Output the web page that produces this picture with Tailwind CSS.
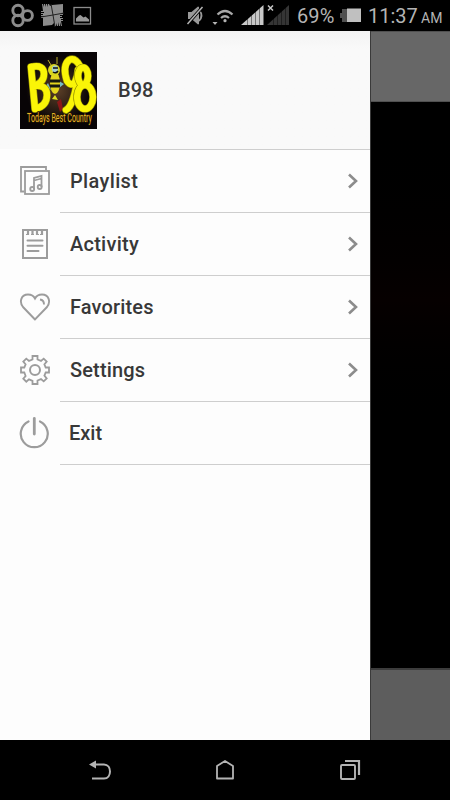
<!DOCTYPE html>
<html lang="en">
<head>
    <meta charset="UTF-8">
    <meta name="viewport" content="width=device-width, initial-scale=1.0">
    <title>B98</title>
    <script src="https://cdn.jsdelivr.net/npm/@tailwindcss/browser@4"></script>
</head>
<body class="bg-black font-['Roboto',sans-serif]">

    <div class="w-[450px] h-[800px] flex flex-col overflow-hidden">

        <!-- Status Bar -->
        <div class="h-[31px] shrink-0 flex text-[#b4b4b4]">
            <svg class="w-[37px] h-[31px] shrink-0" viewBox="0 0 37 31" fill="none" stroke="#8c8c8c" stroke-width="2.9">
                <circle cx="18" cy="10.5" r="5.2"/>
                <circle cx="18" cy="20.5" r="5.2"/>
                <circle cx="27.5" cy="15.5" r="4.9"/>
            </svg>
            <svg class="w-[32px] h-[31px] shrink-0" viewBox="37 0 32 31">
                <path fill="#8c8c8c" d="M42 4h1l1 3V4h1l1 3V4h1l1 3V4h1l1 2 2-1 11-1v9h-2v1h2v1h-3v1h2v1h-2v1h3v1h-2v1h2v1h-2l1 5h-1l-1-4v4h-1l-1-4v4h-1l-1-3v3h-1l-1-3-2 2-9 1v-8h-2v-1h3v-1h-3v-1h2v-1h-2v-1h3v-1h-3v-1h2z"/>
                <path stroke="#222" stroke-width="1" fill="none" d="M51 4l2 11 2 12M41 17l12-2 11-2"/>
            </svg>
            <svg class="w-[31px] h-[31px] shrink-0" viewBox="69 0 31 31">
                <rect x="74" y="7.500" width="16.500" height="16.500" fill="none" stroke="#8c8c8c" stroke-width="1.300"/>
                <path fill="#999" d="M76 21.500v-3l3-3 1.500-.5 3 2.500 2-1 3.500 3v2z"/>
            </svg>
            <div class="grow"></div>
            <svg class="w-[110px] h-[31px] shrink-0" viewBox="182 0 110 31">
                <!-- Muted speaker -->
                <path fill="#999" d="M188 12h3.500l6.500-5.500 1 .5v17l-1 .5-6.500-5.500H188z"/>
                <path fill="none" stroke="#999" stroke-width="1.700" d="M199 10q5 5.500 0 11"/>
                <path stroke="#000" stroke-width="3.200" d="M187 24.500L203 6.500"/>
                <path stroke="#b4b4b4" stroke-width="1.500" d="M187.500 24L202.500 7"/>
                <!-- Wifi -->
                <path fill="#b4b4b4" d="M212.500 22h5l-2.500 3z"/>
                <g fill="none" stroke="#a8a8a8" stroke-width="2.200">
                    <path d="M217.500 14.500q7.500-7 15 0"/>
                    <path d="M221 18q4-3.500 8 0"/>
                </g>
                <circle cx="225" cy="20.700" r="1.600" fill="#b4b4b4"/>
                <!-- Signal bars -->
                <path fill="#c8c8c8" d="M241 25L263.500 5v20z"/>
                <path stroke="#000" stroke-opacity=".7" stroke-width=".6" d="M247.500 5v20M251.500 5v20M255.500 5v20M259.500 5v20"/>
                <path fill="#353535" d="M267 25L289 5v20z"/>
                <path stroke="#000" stroke-opacity=".7" stroke-width=".6" d="M273.500 5v20M277.500 5v20M281.500 5v20M285.500 5v20"/>
                <path stroke="#c8c8c8" stroke-width="1.500" d="M268 5.500l5 5M273 5.500l-5 5"/>
            </svg>
            <div class="w-[46px] shrink-0 pl-[5px] text-[20px] leading-[33px] tracking-[0.1px]">69%</div>
            <svg class="w-[30px] h-[31px] shrink-0" viewBox="338 0 30 31">
                <path fill="#505050" d="M340 13h2v-4h6v13h-6v-4h-2z"/>
                <path fill="#c0c0c0" d="M347 8.500h14v13.500h-14z"/>
            </svg>
            <div class="w-[82px] shrink-0 flex items-baseline whitespace-nowrap leading-[33px]">
                <span class="w-[53px] text-[20px]">11:37</span>
                <span class="text-[14px]">AM</span>
            </div>
        </div>

        <div class="h-[709px] shrink-0 flex">
            <!-- Side Menu -->
            <div class="w-[370px] shrink-0 bg-[#fdfdfd] text-[#383838] text-[20px] font-medium">

                <div class="h-[118px] flex items-center pl-5 bg-gradient-to-b from-[#f3f3f3] via-[#f9f9f9] via-15% to-[#f9f9f9]">
                    <svg class="w-[77px] h-[77px] shrink-0 overflow-visible" viewBox="0 0 77 77">
                        <defs>
                            <radialGradient id="glow">
                                <stop offset="0" stop-color="#5b3f27"/>
                                <stop offset="1" stop-color="#080406"/>
                            </radialGradient>
                        </defs>
                        <rect width="77" height="77" fill="#080406"/>
                        <ellipse cx="38" cy="38" rx="32" ry="34" fill="url(#glow)"/>
                        <path d="M37 50l4-3 2 10-3 3z" fill="#8b1717"/>
                        <!-- Bee -->
                        <path d="M28 31l-3 4 6 3zM39 29l5 3-5 4z" fill="#78bcc4"/>
                        <ellipse cx="35" cy="31" rx="5" ry="11" fill="#e3d51d"/>
                        <path d="M30 29h10M30 34h10" stroke="#161a10" stroke-width="3"/>
                        <path d="M35 43l-3 4 6 1z" fill="#dede22"/>
                        <circle cx="34" cy="18" r="6" fill="#d9d520"/>
                        <ellipse cx="35" cy="17" rx="3" ry="3.500" fill="#a4ced0"/>
                        <path d="M33 16h5M33 20q3 2 5-1" stroke="#111" stroke-width="1.500" fill="none"/>
                        <path d="M31 13l-3-5M37 12V5" stroke="#bdb12a" fill="none"/>
                        <!-- B98 lettering -->
                        <g fill="none" stroke-linecap="round" stroke-linejoin="round">
                            <g stroke="#8f8900" stroke-width="7.600">
                                <path d="M11 15l4 42M11 15q13-3 13 7 0 9-11 12 14-2 14 9 0 11-12 14"/>
                                <path d="M60 14q-5-9-11-6-7 6-2 21 4 6 8 1 3-7 3-12-1 18-5 29-3 9-7 11"/>
                            </g>
                            <g stroke="#faf507" stroke-width="6.400">
                                <path d="M11 15l4 42M11 15q13-3 13 7 0 9-11 12 14-2 14 9 0 11-12 14"/>
                                <path d="M60 14q-5-9-11-6-7 6-2 21 4 6 8 1 3-7 3-12-1 18-5 29-3 9-7 11"/>
                            </g>
                            <g stroke="#8f8900" stroke-width="7.600">
                                <ellipse cx="63" cy="24" rx="5" ry="8.500"/>
                                <ellipse cx="65" cy="45" rx="8" ry="12"/>
                            </g>
                            <g stroke="#faf507" stroke-width="6.400">
                                <ellipse cx="63" cy="24" rx="5" ry="8.500"/>
                                <ellipse cx="65" cy="45" rx="8" ry="12"/>
                            </g>
                        </g>
                        <text transform="translate(7 70) scale(.59 1)" font-size="12" font-weight="400" fill="#e6b52a" stroke="#241500" stroke-width="1.500" paint-order="stroke">Todays Best Country</text>
                    </svg>
                    <div class="pl-[21px]">B98</div>
                </div>

                <div class="h-[63px] flex">
                    <div class="w-[60px] shrink-0 pl-[19px] flex items-center">
                        <svg class="w-8 h-8" viewBox="0 0 32 32" fill="none" stroke="#9c9c9c" stroke-width="1.800">
                            <path d="M5 26.500H2V2h25v3"/>
                            <rect x="6" y="6" width="24" height="23"/>
                            <path d="M15 24V13l7.500-2v11M15 15.500l7.500-2"/>
                            <circle cx="13.200" cy="24" r="2"/>
                            <circle cx="20.700" cy="22" r="2"/>
                        </svg>
                    </div>
                    <div class="grow flex items-center justify-between border-t border-[#cecece] pl-[10px] pr-[11px]">
                        <span class="tracking-[0.35px]">Playlist</span>
                        <svg class="w-3 h-4" viewBox="0 0 12 16" fill="none" stroke="#8c8c8c" stroke-width="2.600"><path d="M2 1.500L9 8l-7 6.500"/></svg>
                    </div>
                </div>

                <div class="h-[63px] flex">
                    <div class="w-[60px] shrink-0 pl-[19px] flex items-center">
                        <svg class="w-8 h-8" viewBox="0 0 32 32" fill="none" stroke="#9c9c9c" stroke-width="2">
                            <rect x="4" y="2" width="24" height="28"/>
                            <path d="M9 3v4M13.500 3v4M18 3v4M23 3v4" stroke-width="2.200"/>
                            <path d="M7 6.500h3M12 6.500h3M17 6.500h3M21 6.500h3" stroke-width="1.200"/>
                            <path d="M8.500 12.500h15M8.500 17.700h15M8.500 22.900h11" stroke-linecap="round"/>
                        </svg>
                    </div>
                    <div class="grow flex items-center justify-between border-t border-[#cecece] pl-[10px] pr-[11px]">
                        <span class="tracking-[0.25px]">Activity</span>
                        <svg class="w-3 h-4" viewBox="0 0 12 16" fill="none" stroke="#8c8c8c" stroke-width="2.600"><path d="M2 1.500L9 8l-7 6.500"/></svg>
                    </div>
                </div>

                <div class="h-[63px] flex">
                    <div class="w-[60px] shrink-0 pl-[19px] flex items-center">
                        <svg class="w-8 h-8" viewBox="0 0 32 32" fill="none" stroke="#9c9c9c" stroke-width="1.900">
                            <path d="M16 28.500L4 16C0 11 2 3.500 9 3.500c4 0 6 2 7 4 1-2 3-4 7-4 7 0 9 7.500 5 12.500z"/>
                            <path d="M21 8.500q4 .5 4 5"/>
                        </svg>
                    </div>
                    <div class="grow flex items-center justify-between border-t border-[#cecece] pl-[10px] pr-[11px]">
                        <span class="tracking-[0.15px]">Favorites</span>
                        <svg class="w-3 h-4" viewBox="0 0 12 16" fill="none" stroke="#8c8c8c" stroke-width="2.600"><path d="M2 1.500L9 8l-7 6.500"/></svg>
                    </div>
                </div>

                <div class="h-[63px] flex">
                    <div class="w-[60px] shrink-0 pl-[19px] flex items-center">
                        <svg class="w-8 h-8" viewBox="0 0 32 32" fill="none" stroke="#9c9c9c" stroke-width="1.800">
                            <path d="M13.500 2h5v3.500l3.500 1.400 2.700-2.300 3 3-2.300 2.700 1.300 3.200H30v5h-3.300l-1.300 3.200 2.300 2.700-3 3-2.700-2.300-3.500 1.400V30h-5v-3.200L10 25.400l-2.700 2.300-3-3L6.600 22l-1.300-3.500H2v-5h3.300l1.300-3.200-2.300-2.700 3-3L10 6.900l3.500-1.400z"/>
                            <circle cx="16" cy="16" r="5" stroke-width="2"/>
                        </svg>
                    </div>
                    <div class="grow flex items-center justify-between border-t border-[#cecece] pl-[10px] pr-[11px]">
                        <span class="tracking-[0.15px]">Settings</span>
                        <svg class="w-3 h-4" viewBox="0 0 12 16" fill="none" stroke="#8c8c8c" stroke-width="2.600"><path d="M2 1.500L9 8l-7 6.500"/></svg>
                    </div>
                </div>

                <div class="h-[64px] flex">
                    <div class="w-[60px] shrink-0 pl-[19px] flex items-center">
                        <svg class="w-8 h-8" viewBox="0 0 32 32" fill="none" stroke="#9c9c9c" stroke-width="2.200" stroke-linecap="round">
                            <path d="M9.500 4.500a13.500 13.500 0 1 0 11.500 0"/>
                            <path d="M15.300 1.500v15.500" stroke-width="2.800"/>
                        </svg>
                    </div>
                    <div class="grow flex items-center border-y border-[#cecece] pl-[9px]">
                        <span>Exit</span>
                    </div>
                </div>
            </div>

            <!-- Dimmed page behind the menu -->
            <div class="grow flex flex-col border-l border-[#3a3a3a]">
                <div class="h-[71px] shrink-0 bg-[#676767] border-y border-[#505050]"></div>
                <div class="grow bg-gradient-to-b from-black via-[#060000] via-35% to-black to-60%"></div>
                <div class="h-[72px] shrink-0 bg-[#5d5d5d] border-t-2 border-[#3c3c3c]"></div>
            </div>
        </div>

        <!-- Navigation Bar -->
        <div class="h-[60px] shrink-0 flex items-center justify-between px-[88px]">
            <svg class="w-6 h-6" viewBox="0 0 24 24" fill="none" stroke="#b4b4b4" stroke-width="2">
                <path d="M6 6.500h10c8 0 8 14 0 14H4"/>
                <path d="M1 6.500l7-4v8z" fill="#b4b4b4" stroke="none"/>
            </svg>
            <svg class="w-6 h-6" viewBox="0 0 24 24" fill="none" stroke="#b4b4b4" stroke-width="1.800" stroke-linejoin="round">
                <path d="M4 8l8-5 8 5v12.500H4z"/>
            </svg>
            <svg class="w-6 h-6" viewBox="0 0 24 24" fill="none" stroke="#b4b4b4" stroke-width="1.900">
                <rect x="3" y="7" width="14" height="14" rx="1"/>
                <path d="M7 3h14v14" stroke-width="2.200"/>
            </svg>
        </div>
    </div>

</body>
</html>
